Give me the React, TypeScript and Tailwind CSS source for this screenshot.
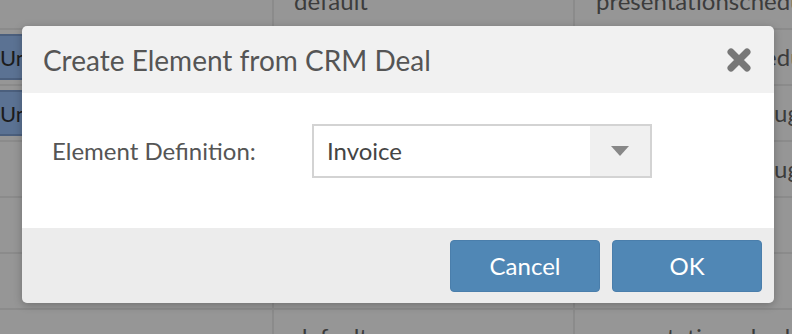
import React from "react";

const rows = [
  { a: "", b: "default", c: "presentationscheduled", blue: false },
  { a: "Unassigned", b: "", c: "presentationscheduled", blue: true },
  { a: "Unassigned", b: "", c: "decisionmakerboughtin", blue: true },
  { a: "", b: "", c: "decisionmakerboughtin", blue: false },
  { a: "", b: "", c: "", blue: false },
  { a: "", b: "", c: "", blue: false },
  { a: "", b: "default", c: "presentationscheduled", blue: false },
];

const BackgroundTable = () => (
  <div className="flex flex-col -mt-[26px]">
    {rows.map((r, i) => (
      <div key={i} className="flex h-[56px] shrink-0 border-b-2 border-[#8b8b8b]">
        <div className="w-[274px] shrink-0 border-r-2 border-[#8b8b8b] flex items-center">
          {r.blue && (
            <div className="-ml-[2px] h-[46px] w-[140px] bg-[#5b7293] border-2 border-[#4b5f7d] flex items-center pl-[0px] text-[22px] text-[#1c1c1c] whitespace-nowrap overflow-hidden">
              {r.a}
            </div>
          )}
        </div>
        <div className="w-[301px] shrink-0 border-r-2 border-[#8b8b8b] flex items-center pl-[20px] text-[24px] text-[#3c3c3c]">
          {r.b}
        </div>
        <div className="flex-1 flex items-center pl-[21px] text-[24px] text-[#3c3c3c] whitespace-nowrap overflow-hidden">
          {r.c}
        </div>
      </div>
    ))}
  </div>
);

export default function App() {
  return (
    <div
      className="relative w-[792px] h-[334px] overflow-hidden bg-[#969696]"
      style={{ fontFamily: "Lato, 'Open Sans', sans-serif" }}
    >
      <BackgroundTable />

      <div className="absolute left-[22px] top-[26px] w-[752px] rounded-[5px] overflow-hidden shadow-[0_2px_8px_rgba(0,0,0,0.25)]">
        <div className="h-[67px] bg-[#f1f1f1] flex items-center justify-between pl-[21px] pr-[23px]">
          <span className="text-[28px] text-[#555555]">Create Element from CRM Deal</span>
          <svg width="24" height="24" viewBox="0 0 24 24" className="mt-[1px]">
            <path d="M4 4 L20 20 M20 4 L4 20" stroke="#777777" strokeWidth="7" strokeLinecap="round" />
          </svg>
        </div>

        <div className="h-[135px] bg-white flex items-start pt-[31px] pl-[30px]">
          <label className="w-[260px] h-[54px] flex items-center text-[24px] text-[#555555]">
            Element Definition:
          </label>
          <div className="w-[340px] h-[54px] border-2 border-[#d3d3d3] flex">
            <div className="flex-1 flex items-center pl-[13px] text-[24px] text-[#444444]">Invoice</div>
            <div className="w-[60px] bg-[#f0f0f0] flex items-center justify-center">
              <svg width="18" height="10" viewBox="0 0 18 10">
                <path d="M0 0 L18 0 L9 10 Z" fill="#888888" />
              </svg>
            </div>
          </div>
        </div>

        <div className="h-[75px] bg-[#ececec] flex items-start justify-end gap-[12px] pt-[12px] pr-[12px]">
          <button className="w-[150px] h-[52px] rounded-[4px] bg-[#5087b5] border border-[#4a7eab] text-white text-[24px]">
            Cancel
          </button>
          <button className="w-[150px] h-[52px] rounded-[4px] bg-[#5087b5] border border-[#4a7eab] text-white text-[24px]">
            OK
          </button>
        </div>
      </div>
    </div>
  );
}
